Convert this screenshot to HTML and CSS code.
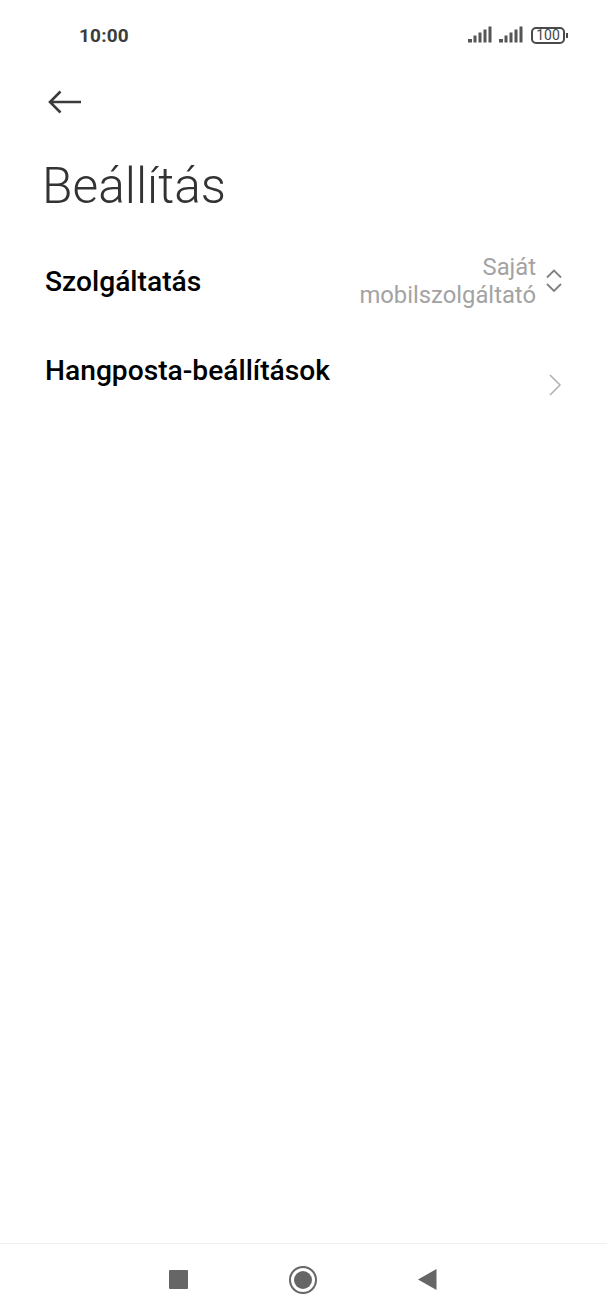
FILE: index.html
```html
<!DOCTYPE html>
<html lang="hu">
<head>
<meta charset="utf-8">
<title>Beállítás</title>
<link rel="stylesheet" href="styles.css">
</head>
<body>
<div class="screen">
  <header class="status">
    <span class="time">10:00</span>
    <div class="status-icons">
      <svg class="signal" width="24" height="17" viewBox="0 0 24 17"><g fill="#555"><rect x="0" y="13" width="4" height="3.500"/><rect x="5.500" y="9.500" width="3" height="7"/><rect x="10.500" y="6.500" width="3" height="10"/><rect x="15.500" y="3.500" width="3" height="13"/><rect x="20.500" y="0.500" width="3" height="16"/></g></svg>
      <svg class="signal" width="24" height="17" viewBox="0 0 24 17"><g fill="#555"><rect x="0" y="13" width="4" height="3.500"/><rect x="5.500" y="9.500" width="3" height="7"/><rect x="10.500" y="6.500" width="3" height="10"/><rect x="15.500" y="3.500" width="3" height="13"/><rect x="20.500" y="0.500" width="3" height="16"/></g></svg>
      <div class="battery"><span class="battery-body">100</span><span class="battery-tip"></span></div>
    </div>
  </header>
  <div class="toolbar">
    <svg width="36" height="24" viewBox="0 0 36 24"><path d="M34 12H3M13.500 1.500L3 12l10.500 10.500" fill="none" stroke="#3a3a3a" stroke-width="2.600"/></svg>
  </div>
  <h1 class="title">Beállítás</h1>
  <main class="list">
    <div class="row row-service">
      <span class="label">Szolgáltatás</span>
      <div class="value-group">
        <span class="value">Saját<br>mobilszolgáltató</span>
        <svg class="updown" width="16" height="25" viewBox="0 0 16 25"><path d="M1 9.500L8 2.500l7 7M1 16l7 7 7-7" fill="none" stroke="#808080" stroke-width="1.800"/></svg>
      </div>
    </div>
    <div class="row row-voicemail">
      <span class="label">Hangposta-beállítások</span>
      <svg class="chevron" width="14" height="22" viewBox="0 0 14 22"><path d="M2 1l10 10L2 21" fill="none" stroke="#b0b0b0" stroke-width="1.500"/></svg>
    </div>
  </main>
  <nav class="navbar">
    <span class="nav-square"></span>
    <span class="nav-circle"><span class="nav-dot"></span></span>
    <svg width="19" height="21" viewBox="0 0 19 21"><path d="M18.500 0v21L0 10.500z" fill="#666"/></svg>
  </nav>
</div>
</body>
</html>
```
FILE: styles.css
```css
* { box-sizing: border-box; }
html, body { margin: 0; padding: 0; background: #fff; }
.screen {
  width: 607px;
  height: 1316px;
  display: flex;
  flex-direction: column;
  font-family: Roboto, "Liberation Sans", sans-serif;
  overflow: hidden;
}
.status {
  height: 70px;
  padding: 0 39px 0 79px;
  display: flex;
  justify-content: space-between;
  align-items: center;
}
.time { font-size: 19px; font-weight: 700; color: #3c3c3c; letter-spacing: 0.2px; }
.status-icons { display: flex; align-items: center; gap: 7px; }
.signal { display: block; margin-top: -2px; }
.battery { display: flex; align-items: center; margin-left: 1px; }
.battery-body {
  width: 34px;
  height: 17px;
  border: 2px solid #4a4a4a;
  border-radius: 5px;
  font-size: 14px;
  line-height: 13px;
  text-align: center;
  color: #444;
}
.battery-tip { width: 2px; height: 5px; background: #4a4a4a; margin-left: 1px; }
.toolbar { height: 64px; padding-left: 47px; display: flex; align-items: center; }
.title {
  margin: 22px 0 0;
  padding-left: 42px;
  font-size: 49.700px;
  font-weight: 300;
  line-height: 60px;
  color: #333;
}
.list { display: flex; flex-direction: column; }
.row { display: flex; justify-content: space-between; padding: 0 45px; }
.row-service { margin-top: 35px; height: 61px; align-items: center; }
.row-voicemail { margin-top: 39px; height: 44px; }
.label { font-size: 28.200px; font-weight: 500; color: #000; line-height: 40px; }
.value-group { display: flex; align-items: center; gap: 10px; }
.value { font-size: 23.800px; line-height: 28px; text-align: right; color: #a3a3a3; margin-top: -2px; }
.updown { margin-top: -3px; }
.chevron { margin-top: 23px; }
.navbar {
  margin-top: auto;
  height: 73px;
  border-top: 1px solid #f0f0f0;
  display: flex;
  align-items: center;
  justify-content: center;
  gap: 101px;
  padding: 0 1px 1px 0;
}
.nav-square { width: 19px; height: 19px; background: #666; border-radius: 1px; }
.nav-circle {
  width: 28px;
  height: 28px;
  border: 2.500px solid #666;
  border-radius: 50%;
  display: flex;
  align-items: center;
  justify-content: center;
}
.nav-dot { width: 18px; height: 18px; background: #666; border-radius: 50%; }
```
